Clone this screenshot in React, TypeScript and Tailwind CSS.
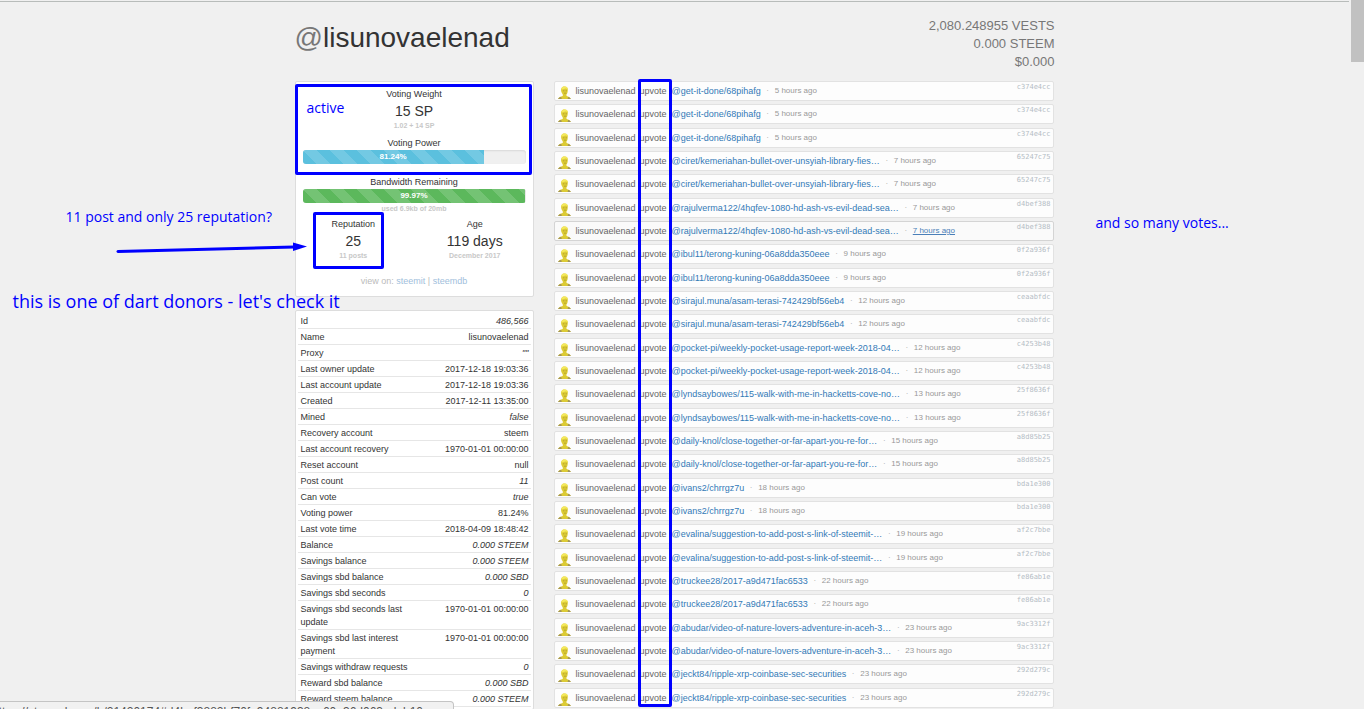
import clsx from 'clsx';

interface Vote {
  target: string;
  ago: string;
  tx: string;
  hovered?: boolean;
}

interface Field {
  label: string;
  value: string;
  italic?: boolean;
}

const votes: Vote[] = [
  { target: '@get-it-done/68pihafg', ago: '5 hours ago', tx: 'c374e4cc' },
  { target: '@get-it-done/68pihafg', ago: '5 hours ago', tx: 'c374e4cc' },
  { target: '@get-it-done/68pihafg', ago: '5 hours ago', tx: 'c374e4cc' },
  { target: '@ciret/kemeriahan-bullet-over-unsyiah-library-fies…', ago: '7 hours ago', tx: '65247c75' },
  { target: '@ciret/kemeriahan-bullet-over-unsyiah-library-fies…', ago: '7 hours ago', tx: '65247c75' },
  { target: '@rajulverma122/4hqfev-1080-hd-ash-vs-evil-dead-sea…', ago: '7 hours ago', tx: 'd4bef388' },
  { target: '@rajulverma122/4hqfev-1080-hd-ash-vs-evil-dead-sea…', ago: '7 hours ago', tx: 'd4bef388', hovered: true },
  { target: '@ibul11/terong-kuning-06a8dda350eee', ago: '9 hours ago', tx: '0f2a936f' },
  { target: '@ibul11/terong-kuning-06a8dda350eee', ago: '9 hours ago', tx: '0f2a936f' },
  { target: '@sirajul.muna/asam-terasi-742429bf56eb4', ago: '12 hours ago', tx: 'ceaabfdc' },
  { target: '@sirajul.muna/asam-terasi-742429bf56eb4', ago: '12 hours ago', tx: 'ceaabfdc' },
  { target: '@pocket-pi/weekly-pocket-usage-report-week-2018-04…', ago: '12 hours ago', tx: 'c4253b48' },
  { target: '@pocket-pi/weekly-pocket-usage-report-week-2018-04…', ago: '12 hours ago', tx: 'c4253b48' },
  { target: '@lyndsaybowes/115-walk-with-me-in-hacketts-cove-no…', ago: '13 hours ago', tx: '25f8636f' },
  { target: '@lyndsaybowes/115-walk-with-me-in-hacketts-cove-no…', ago: '13 hours ago', tx: '25f8636f' },
  { target: '@daily-knol/close-together-or-far-apart-you-re-for…', ago: '15 hours ago', tx: 'a8d85b25' },
  { target: '@daily-knol/close-together-or-far-apart-you-re-for…', ago: '15 hours ago', tx: 'a8d85b25' },
  { target: '@ivans2/chrrgz7u', ago: '18 hours ago', tx: 'bda1e300' },
  { target: '@ivans2/chrrgz7u', ago: '18 hours ago', tx: 'bda1e300' },
  { target: '@evalina/suggestion-to-add-post-s-link-of-steemit-…', ago: '19 hours ago', tx: 'af2c7bbe' },
  { target: '@evalina/suggestion-to-add-post-s-link-of-steemit-…', ago: '19 hours ago', tx: 'af2c7bbe' },
  { target: '@truckee28/2017-a9d471fac6533', ago: '22 hours ago', tx: 'fe86ab1e' },
  { target: '@truckee28/2017-a9d471fac6533', ago: '22 hours ago', tx: 'fe86ab1e' },
  { target: '@abudar/video-of-nature-lovers-adventure-in-aceh-3…', ago: '23 hours ago', tx: '9ac3312f' },
  { target: '@abudar/video-of-nature-lovers-adventure-in-aceh-3…', ago: '23 hours ago', tx: '9ac3312f' },
  { target: '@jeckt84/ripple-xrp-coinbase-sec-securities', ago: '23 hours ago', tx: '292d279c' },
  { target: '@jeckt84/ripple-xrp-coinbase-sec-securities', ago: '23 hours ago', tx: '292d279c' },
];

const fields: Field[] = [
  { label: 'Id', value: '486,566', italic: true },
  { label: 'Name', value: 'lisunovaelenad' },
  { label: 'Proxy', value: '""', italic: true },
  { label: 'Last owner update', value: '2017-12-18 19:03:36' },
  { label: 'Last account update', value: '2017-12-18 19:03:36' },
  { label: 'Created', value: '2017-12-11 13:35:00' },
  { label: 'Mined', value: 'false', italic: true },
  { label: 'Recovery account', value: 'steem' },
  { label: 'Last account recovery', value: '1970-01-01 00:00:00' },
  { label: 'Reset account', value: 'null' },
  { label: 'Post count', value: '11', italic: true },
  { label: 'Can vote', value: 'true', italic: true },
  { label: 'Voting power', value: '81.24%' },
  { label: 'Last vote time', value: '2018-04-09 18:48:42' },
  { label: 'Balance', value: '0.000 STEEM', italic: true },
  { label: 'Savings balance', value: '0.000 STEEM', italic: true },
  { label: 'Savings sbd balance', value: '0.000 SBD', italic: true },
  { label: 'Savings sbd seconds', value: '0', italic: true },
  { label: 'Savings sbd seconds last update', value: '1970-01-01 00:00:00' },
  { label: 'Savings sbd last interest payment', value: '1970-01-01 00:00:00' },
  { label: 'Savings withdraw requests', value: '0', italic: true },
  { label: 'Reward sbd balance', value: '0.000 SBD', italic: true },
  { label: 'Reward steem balance', value: '0.000 STEEM', italic: true },
];

function Avatar() {
  return (
    <svg viewBox="0 0 13 13" className="mt-1 h-[13px] w-[13px] shrink-0" aria-hidden="true">
      <path d="M0 13 C.6 11.4 2.4 10.6 4.8 10 L4.8 8.4 C3.4 7 2.8 4.4 3.2 2.8 C3.8 .8 5.2 .4 6.8 .5 C8.8 .6 9.9 1.8 9.8 3.4 C9.8 5.6 9.4 7.4 8.4 8.6 L8.6 10 C10.4 10.6 12.2 11.4 12.8 13 Z" fill="#dccb35" />
      <path d="M3.2 3 C4 .8 5.4 .4 6.8 .5 C8.8 .7 9.8 1.8 9.8 3 L7.4 2.4 L4.4 3.6 Z" fill="#f4e95c" />
      <path d="M5 4.8 H6.4 M7.6 4.8 H9 M6 7.2 H8.2" stroke="#a8962a" strokeWidth=".7" />
      <path d="M0 13 C.8 11.8 1.8 11.2 3.2 11 L3.8 13 Z M9.6 13 L10.2 11 C11.6 11.4 12.4 12 12.8 13 Z" fill="#a0935a" />
    </svg>
  );
}

interface ProgressProps {
  label: string;
  value: number;
  tone: 'info' | 'success';
}

function Progress({ label, value, tone }: ProgressProps) {
  return (
    <div
      role="progressbar"
      aria-label={label}
      aria-valuenow={value}
      className="h-[14px] overflow-hidden rounded-[3px] bg-[#f0f0f0] shadow-[inset_0_1px_2px_rgba(0,0,0,0.1)]"
    >
      <div
        className={clsx(
          'h-full bg-[linear-gradient(45deg,rgba(255,255,255,.15)_25%,transparent_25%,transparent_50%,rgba(255,255,255,.15)_50%,rgba(255,255,255,.15)_75%,transparent_75%,transparent)] bg-[length:27px_27px] text-center text-[8px] leading-[13px] font-bold text-white',
          tone === 'info' ? 'bg-[#5bc0de]' : 'bg-[#5cb85c]'
        )}
        style={{ width: `${value}%` }}
      >
        {value}%
      </div>
    </div>
  );
}

interface StatProps {
  title: string;
  value: string;
  note: string;
}

function Stat({ title, value, note }: StatProps) {
  return (
    <div className="flex-1 text-center">
      <div className="text-[9px] leading-[15px]">{title}</div>
      <div className="text-[14px] leading-[18px]">{value}</div>
      <div className="text-[7px] leading-3 font-bold text-[#c8c8c8]">{note}</div>
    </div>
  );
}

function Summary() {
  return (
    <section className="relative rounded-xs border border-[#ddd] bg-white px-[7px] pt-[5px] pb-[7px]">
      <Stat title="Voting Weight" value="15 SP" note="1.02 + 14 SP" />
      <div className="mt-1 text-center text-[9px] leading-[14px]">Voting Power</div>
      <Progress label="Voting Power" value={81.24} tone="info" />
      <div className="mt-[11px] text-center text-[9px] leading-[14px]">Bandwidth Remaining</div>
      <Progress label="Bandwidth Remaining" value={99.97} tone="success" />
      <div className="text-center text-[7px] leading-[11px] font-bold text-[#c8c8c8]">used 6.9kb of 20mb</div>
      <div className="mt-[3px] flex gap-5">
        <Stat title="Reputation" value="25" note="11 posts" />
        <Stat title="Age" value="119 days" note="December 2017" />
      </div>
      <div className="mt-[11px] text-center text-[9px] leading-4 text-[#bbb]">
        view on:{' '}
        <a href="#steemit" className="text-[#9fc0dc]">steemit</a>
        {' | '}
        <a href="#steemdb" className="text-[#9fc0dc]">steemdb</a>
      </div>

      {/* markup over the card */}
      <div className="absolute -left-px top-[2px] h-[91px] w-[237px] rounded-xs border-3 border-[#00f]" />
      <span className="absolute left-[11px] top-[16px] font-['Open_Sans',sans-serif] text-[14px] leading-5 text-[#00f]">
        active
      </span>
      <div className="absolute left-[17px] top-[130px] h-[57px] w-[71px] rounded-xs border-3 border-[#00f]" />
    </section>
  );
}

function AccountTable() {
  return (
    <section className="mt-[13px] rounded-xs border border-[#ddd] bg-white p-[2px]">
      <table className="w-full border-collapse text-[9px] leading-[13px]">
        <tbody>
          {fields.map((f) => (
            <tr key={f.label} className="border-b border-[#e6e6e6] align-top">
              <th scope="row" className="w-[124px] px-[3px] pt-[2px] text-left font-normal">
                {f.label}
              </th>
              <td className={clsx('px-[2px] pt-[2px] text-right whitespace-nowrap', f.italic && 'italic')}>
                {f.value}
              </td>
            </tr>
          ))}
        </tbody>
      </table>
    </section>
  );
}

function VoteRow({ target, ago, tx, hovered }: Vote) {
  return (
    <li
      className={clsx(
        'mb-[3px] flex h-5 items-start rounded-xs border pr-[2px] pl-[3px] text-[9px] leading-[18px] whitespace-nowrap text-[#666] nth-[3n+2]:mb-1',
        hovered ? 'border-[#d4d4d4] bg-[#fafafa]' : 'border-[#e2e2e2] bg-[#fdfdfd]'
      )}
    >
      <Avatar />
      <span className="ml-[5px] w-16 shrink-0">lisunovaelenad</span>
      <span className="w-8 shrink-0">upvote</span>
      <a href="#post" className="text-[#337ab7]">{target}</a>
      <span className="w-[14px] text-center text-[8px] text-[#aaa]">·</span>
      <a href="#tx" className={clsx('text-[8px]', hovered ? 'text-[#4a7fb8] underline' : 'text-[#999]')}>
        {ago}
      </a>
      <span className="ml-auto font-['DejaVu_Sans_Mono',monospace] text-[7px] leading-[11px] text-[#b4bcc4]">{tx}</span>
    </li>
  );
}

export default function App() {
  return (
    <div className="flex h-screen overflow-hidden bg-[#f0f0f0] font-['Liberation_Sans',Arial,sans-serif] text-[#333]">
      <div className="relative mt-px min-w-0 flex-1 border-t border-[#b8bcba]">
        <main className="relative mx-auto w-full max-w-[760px]">
          <header className="flex h-[79px] items-start justify-between pt-[15px]">
            <h1 className="pt-[2px] text-[28px] leading-[38px]">
              <span className="text-[#777]">@</span>lisunovaelenad
            </h1>
            <div className="text-right text-[13px] leading-[18px] text-[#777]">
              <div>2,080.248955 VESTS</div>
              <div>0.000 STEEM</div>
              <div>$0.000</div>
            </div>
          </header>

          <div className="flex gap-5">
            <div className="w-[239px] shrink-0">
              <Summary />
              <AccountTable />
            </div>
            <ul className="min-w-0 flex-1 pr-px">
              {votes.map((vote, i) => (
                <VoteRow key={i} {...vote} />
              ))}
            </ul>
          </div>

          {/* marker around the upvote column */}
          <div className="absolute top-[77px] left-[343px] h-[628px] w-[34px] rounded-xs border-3 border-[#00f]" />

          {/* notes in the margins */}
          <div className="absolute top-[203px] -left-[229px] font-['Open_Sans',sans-serif] text-[14px] leading-6 whitespace-nowrap text-[#00f]">
            11 post and only 25 reputation?
          </div>
          <svg viewBox="0 0 192 14" className="absolute top-[239px] -left-[179px] h-[14px] w-[192px]" aria-hidden="true">
            <path d="M2 10.5 L178 6" stroke="#00f" strokeWidth="3" strokeLinecap="round" />
            <path d="M177 1.5 L191 5.5 L177 10 Z" fill="#00f" />
          </svg>
          <div className="absolute top-[287px] -left-[282px] font-['Open_Sans',sans-serif] text-[18px] leading-6 whitespace-nowrap text-[#00f]">
            this is one of dart donors - let's check it
          </div>
          <div className="absolute top-[209px] left-[801px] font-['Open_Sans',sans-serif] text-[14px] leading-6 whitespace-nowrap text-[#00f]">
            and so many votes...
          </div>
        </main>

        {/* link preview */}
        <div className="fixed left-0 top-full -mt-2 h-5 w-[454px] overflow-hidden rounded-tr border border-l-0 border-[#c4c4c4] bg-[#f1f1f1] pt-[2px] text-[12px] leading-4 whitespace-nowrap text-[#555]">
          <span className="-ml-2">https://steemd.com/b/21420174#d4bef3882bf70fa94881938ca60a36d063adab10</span>
        </div>
      </div>

      {/* scrollbar */}
      <div className="ml-[2px] w-[13px] shrink-0">
        <div className="h-[62px] bg-[#c1c1c1]" />
      </div>
    </div>
  );
}
